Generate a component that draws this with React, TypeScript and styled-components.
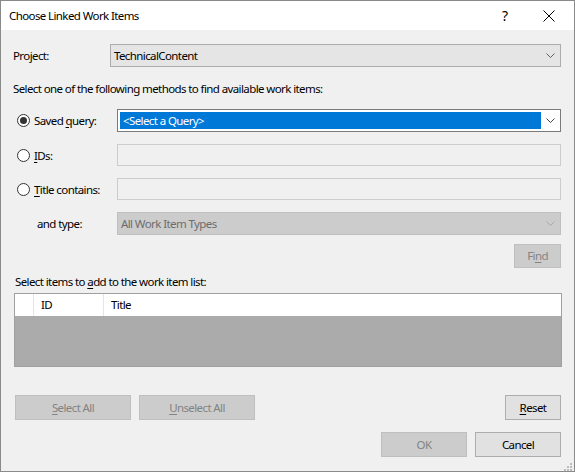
import React from "react";
import styled, { createGlobalStyle } from "styled-components";

const Global = createGlobalStyle`
  html, body { margin: 0; padding: 0; background: #ffffff; }
  body {
    font-family: "Noto Sans", "Open Sans", Arial, sans-serif;
    font-size: 11.5px;
    letter-spacing: -0.6px;
    color: #000;
  }
  * { box-sizing: border-box; }
`;

const Window = styled.div`
  width: 575px;
  height: 472px;
  border: 1px solid #8a8a8a;
  display: flex;
  flex-direction: column;
  background: #f0f0f0;
  overflow: hidden;
`;

const TitleBar = styled.div`
  height: 29px;
  background: #ffffff;
  display: flex;
  align-items: center;
  padding-left: 8px;
  flex: none;
`;

const TitleText = styled.div`
  flex: 1;
  line-height: 16px;
`;

const TitleButton = styled.div`
  width: 46px;
  height: 29px;
  display: flex;
  align-items: center;
  justify-content: center;
  font-size: 14px;
  letter-spacing: 0;
  color: #000;
`;

const CloseButton = styled(TitleButton)`
  padding-right: 4px;
`;

const Body = styled.div`
  position: relative;
  flex: 1;
  display: flex;
  flex-direction: column;
  padding: 0 13px 0 12px;
`;

const Row = styled.div<{ $top: number; $labelWidth: number }>`
  display: grid;
  grid-template-columns: ${(p) => p.$labelWidth}px 1fr;
  align-items: center;
  margin-top: ${(p) => p.$top}px;
  height: 23px;
`;

const Label = styled.div<{ $indent?: number }>`
  padding-left: ${(p) => p.$indent ?? 0}px;
  line-height: 16px;
  white-space: nowrap;
`;

const RadioLabel = styled.label`
  display: flex;
  align-items: center;
  gap: 4px;
  padding-left: 4px;
  line-height: 16px;
  white-space: nowrap;
`;

const RadioCircle = styled.span<{ $checked?: boolean }>`
  width: 13px;
  height: 13px;
  border-radius: 50%;
  border: 1px solid #333333;
  background: #ffffff;
  display: flex;
  align-items: center;
  justify-content: center;
  flex: none;
  &::after {
    content: "";
    display: ${(p) => (p.$checked ? "block" : "none")};
    width: 7px;
    height: 7px;
    border-radius: 50%;
    background: #333333;
  }
`;

const Mn = styled.span`
  text-decoration: underline;
  text-underline-offset: 2px;
`;

const Combo = styled.div<{ $variant: "normal" | "focused" | "disabled" }>`
  height: 23px;
  display: flex;
  align-items: stretch;
  border: 1px solid
    ${(p) => (p.$variant === "focused" ? "#7a7a7a" : p.$variant === "disabled" ? "#bfbfbf" : "#adadad")};
  background: ${(p) => (p.$variant === "focused" ? "#ffffff" : p.$variant === "disabled" ? "#cccccc" : "#e5e5e5")};
  color: ${(p) => (p.$variant === "disabled" ? "#6d6d6d" : "#000")};
  padding: ${(p) => (p.$variant === "focused" ? "2px 0 2px 2px" : "0")};
`;

const ComboText = styled.div<{ $selected?: boolean }>`
  flex: 1;
  display: flex;
  align-items: center;
  padding-left: 3px;
  background: ${(p) => (p.$selected ? "#0078d7" : "transparent")};
  color: ${(p) => (p.$selected ? "#ffffff" : "inherit")};
  line-height: 16px;
`;

const Chevron = styled.div`
  width: 19px;
  display: flex;
  align-items: center;
  justify-content: center;
  flex: none;
`;

const TextBox = styled.div`
  height: 22px;
  align-self: start;
  border: 1px solid #cccccc;
  background: #f0f0f0;
`;

const Paragraph = styled.div<{ $top: number; $indent?: number }>`
  margin-top: ${(p) => p.$top}px;
  padding-left: ${(p) => p.$indent ?? 0}px;
  line-height: 16px;
  white-space: nowrap;
`;

const ButtonRow = styled.div<{ $top: number }>`
  display: flex;
  align-items: center;
  gap: 8px;
  margin-top: ${(p) => p.$top}px;
  padding-left: 2px;
`;

const Spacer = styled.div`
  flex: 1;
`;

const Button = styled.div<{ $width: number; $disabled?: boolean; $height?: number }>`
  width: ${(p) => p.$width}px;
  height: ${(p) => p.$height ?? 25}px;
  display: flex;
  align-items: center;
  justify-content: center;
  border: 1px solid ${(p) => (p.$disabled ? "#bfbfbf" : "#adadad")};
  background: ${(p) => (p.$disabled ? "#cccccc" : "#e1e1e1")};
  color: ${(p) => (p.$disabled ? "#838383" : "#000")};
  line-height: 16px;
`;

const List = styled.div`
  margin: 3px -1px 0 1px;
  height: 74px;
  border: 1px solid #a0a0a0;
  display: flex;
  flex-direction: column;
  background: #ababab;
`;

const ListHeader = styled.div`
  height: 22px;
  background: #ffffff;
  display: grid;
  grid-template-columns: 19px 70px 1fr;
`;

const HeaderCell = styled.div<{ $divider?: boolean }>`
  display: flex;
  align-items: center;
  padding-left: 7px;
  border-right: ${(p) => (p.$divider ? "1px solid #e5e5e5" : "none")};
  line-height: 16px;
`;

const Grip = styled.div`
  position: absolute;
  right: 2px;
  bottom: 2px;
  width: 10px;
  height: 10px;
`;

const ChevronIcon = ({ color }: { color: string }) => (
  <svg width="9" height="5" viewBox="0 0 9 5">
    <polyline points="0.5,0.5 4.5,4.5 8.5,0.5" fill="none" stroke={color} strokeWidth="1" />
  </svg>
);

export default function App() {
  return (
    <>
      <Global />
      <Window>
        <TitleBar>
          <TitleText>Choose Linked Work Items</TitleText>
          <TitleButton>?</TitleButton>
          <CloseButton>
            <svg width="12" height="12" viewBox="0 0 12 12">
              <path d="M0.5 0.5 L11.5 11.5 M11.5 0.5 L0.5 11.5" stroke="#000" strokeWidth="1" />
            </svg>
          </CloseButton>
        </TitleBar>
        <Body>
          <Row $top={14} $labelWidth={97}>
            <Label>Project:</Label>
            <Combo $variant="normal">
              <ComboText>TechnicalContent</ComboText>
              <Chevron>
                <ChevronIcon color="#606060" />
              </Chevron>
            </Combo>
          </Row>
          <Paragraph $top={14}>Select one of the following methods to find available work items:</Paragraph>
          <Row $top={12} $labelWidth={104}>
            <RadioLabel>
              <RadioCircle $checked />
              <span>
                Saved <Mn>q</Mn>uery:
              </span>
            </RadioLabel>
            <Combo $variant="focused">
              <ComboText $selected>&lt;Select a Query&gt;</ComboText>
              <Chevron>
                <ChevronIcon color="#404040" />
              </Chevron>
            </Combo>
          </Row>
          <Row $top={12} $labelWidth={104}>
            <RadioLabel>
              <RadioCircle />
              <span>
                <Mn>I</Mn>Ds:
              </span>
            </RadioLabel>
            <TextBox />
          </Row>
          <Row $top={11} $labelWidth={104}>
            <RadioLabel>
              <RadioCircle />
              <span>
                <Mn>T</Mn>itle contains:
              </span>
            </RadioLabel>
            <TextBox />
          </Row>
          <Row $top={11} $labelWidth={104}>
            <Label $indent={24}>and type:</Label>
            <Combo $variant="disabled">
              <ComboText>All Work Item Types</ComboText>
              <Chevron>
                <ChevronIcon color="#a8a8a8" />
              </Chevron>
            </Combo>
          </Row>
          <ButtonRow $top={9}>
            <Spacer />
            <Button $width={47} $height={24} $disabled>
              <span>
                Fi<Mn>n</Mn>d
              </span>
            </Button>
          </ButtonRow>
          <Paragraph $top={6} $indent={2}>
            Select items to <Mn>a</Mn>dd to the work item list:
          </Paragraph>
          <List>
            <ListHeader>
              <HeaderCell $divider />
              <HeaderCell $divider>ID</HeaderCell>
              <HeaderCell>Title</HeaderCell>
            </ListHeader>
          </List>
          <ButtonRow $top={28}>
            <Button $width={116} $disabled>
              <span>
                <Mn>S</Mn>elect All
              </span>
            </Button>
            <Button $width={116} $disabled>
              <span>
                <Mn>U</Mn>nselect All
              </span>
            </Button>
            <Spacer />
            <Button $width={56}>
              <span>
                <Mn>R</Mn>eset
              </span>
            </Button>
          </ButtonRow>
          <ButtonRow $top={12}>
            <Spacer />
            <Button $width={86} $disabled>
              OK
            </Button>
            <Button $width={86}>Cancel</Button>
          </ButtonRow>
          <Grip>
            <svg width="10" height="10" viewBox="0 0 10 10">
              <rect x="8" y="2" width="2" height="2" fill="#bcbcbc" />
              <rect x="5" y="5" width="2" height="2" fill="#bcbcbc" />
              <rect x="8" y="5" width="2" height="2" fill="#bcbcbc" />
              <rect x="2" y="8" width="2" height="2" fill="#bcbcbc" />
              <rect x="5" y="8" width="2" height="2" fill="#bcbcbc" />
              <rect x="8" y="8" width="2" height="2" fill="#bcbcbc" />
            </svg>
          </Grip>
        </Body>
      </Window>
    </>
  );
}
